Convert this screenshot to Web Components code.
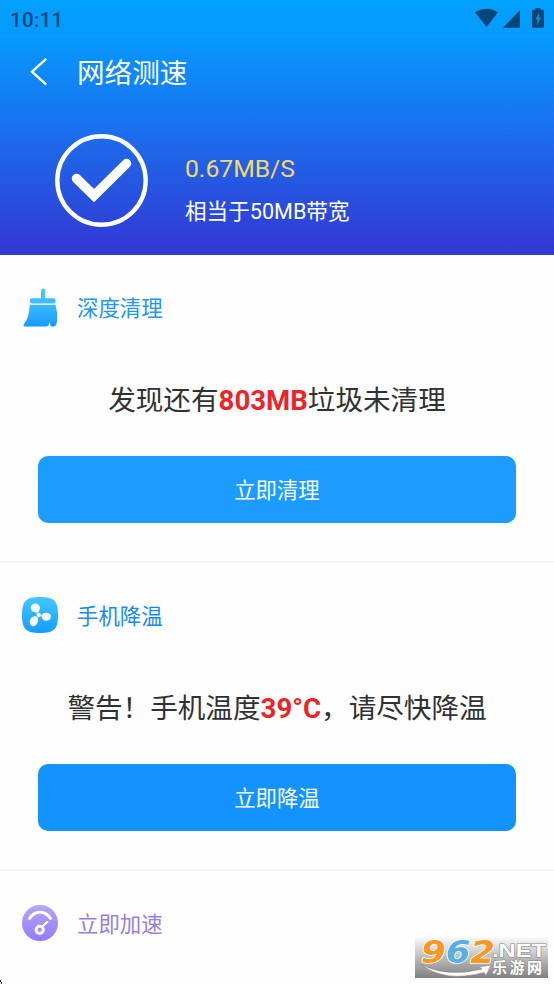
<!DOCTYPE html>
<html lang="zh-CN">
<head>
<meta charset="utf-8">
<title>网络测速</title>
<style>
html,body{margin:0;padding:0}
body{width:554px;height:984px;overflow:hidden;background:#fefefe;position:relative;font-family:Roboto,"Noto Sans CJK SC",sans-serif;color:#303133}
</style>
</head>
<body>
<speed-page></speed-page>
<script>
const define = (name, html) => customElements.define(name, class extends HTMLElement {
  constructor() {
    super();
    const t = document.createElement('template');
    t.innerHTML = html;
    this.attachShadow({mode: 'open'}).append(t.content.cloneNode(true));
  }
});

define('status-bar', `
<style>
:host{display:flex;height:38px;box-sizing:border-box;padding:0 9px 0 10px;align-items:center;justify-content:space-between;color:#064778}
span{font-size:20.500px;line-height:38px;font-weight:500;letter-spacing:.3px;padding-top:1px}
svg{display:block}
</style>
<span>10:11</span>
<svg width="72" height="38" viewBox="473 0 72 38">
<path fill="#064778" d="M475 12.3C482 7.400 491 7.400 498 12.300L486.500 27ZM503 27.700L520 10v17.700ZM535.300 8h5v1.700h2.200q1.500 0 1.500 1.500v15q0 1.500-1.500 1.500h-9q-1.500 0-1.500-1.500v-15q0-1.500 1.500-1.500h1.800Z"/>
<path fill="#1c86cf" d="M539.300 12.500l-4 7h2.300l-1 6 4.400-8h-2.300Z"/>
</svg>`);

define('nav-bar', `
<style>
:host{display:flex;align-items:center;height:68px;padding-left:29px;color:#fff}
svg{display:block;margin-right:28px}
span{font-size:27.600px;line-height:40px;padding-top:3px}
</style>
<svg width="20" height="30" viewBox="0 0 20 30"><path d="M17.200 1.800L3 14.700 17.200 27.600" fill="none" stroke="#fff" stroke-width="2.400"/></svg>
<span><slot></slot></span>`);

define('speed-result', `
<style>
:host{display:flex;padding:27px 0 0 54px;gap:36px;color:#fff}
svg{display:block}
.t{display:flex;flex-direction:column;padding-top:20px}
.a{font-size:24.700px;line-height:32px;color:#f7d768}
.b{font-size:21.600px;line-height:32px;margin-top:11px}
</style>
<svg width="95" height="95" viewBox="0 0 95 95"><circle cx="47.500" cy="47.500" r="44.200" fill="none" stroke="#fff" stroke-width="4.400"/><path d="M22.500 45.500L40 62.700 72.500 30.500" fill="none" stroke="#fff" stroke-width="9.500" stroke-linecap="round" stroke-linejoin="miter"/></svg>
<div class="t"><div class="a"><slot name="speed"></slot></div><div class="b"><slot name="band"></slot></div></div>`);

define('top-panel', `
<style>:host{display:block;height:255px;background:linear-gradient(#00a0ff 0,#079aff 14%,#3436d3 100%)}</style>
<slot></slot>`);

define('feature-card', `
<style>
:host{display:block;height:308px;box-sizing:border-box;border-bottom:2px solid #f6f6f6}
.h{display:flex;align-items:center;padding:32px 0 0 21px;gap:18px;height:40px;color:var(--tone)}
.h span{font-size:21.400px;line-height:40px;padding-top:3px}
.m{margin-top:54px;height:40px;line-height:40px;text-align:center;font-size:27.600px;white-space:nowrap}
.b{margin:35px 38.500px 0 38.400px;height:65px;padding-top:2px;border-radius:10px;background:var(--btn);color:#fff;text-align:center;font-size:21.400px;line-height:65px}
::slotted(b){color:#ec2429;font-weight:700}
:host([short]){height:110px;border:0}
:host([short]) .m,:host([short]) .b{display:none}
</style>
<div class="h"><slot name="icon"></slot><span><slot name="title"></slot></span></div>
<div class="m"><slot></slot></div>
<div class="b"><slot name="action"></slot></div>`);

define('icon-brush', `
<style>:host{display:block;width:38px;height:40px}svg{display:block}</style>
<svg width="38" height="40" viewBox="0 0 38 40"><defs><linearGradient id="g" x1="0" y1="0" x2="0" y2="40" gradientUnits="userSpaceOnUse"><stop stop-color="#4dccfe"/><stop offset=".5" stop-color="#3bb6fc"/><stop offset="1" stop-color="#149bff"/></linearGradient></defs>
<g fill="url(#g)"><rect x="20" y="1.500" width="4.200" height="13" rx="2.100"/><rect x="9" y="11.300" width="25.500" height="5.200" rx="1.800"/><path d="M8.700 17.800h25.800Q37 26 36 34.500q-.7 5-3.600 5h-1.600q-2.300 0-1.600-5.500-1.500 5.500-4 5.500H4Q1.400 39 3.300 36.500 8.500 30 8.700 17.800Z"/></g></svg>`);

define('icon-fan', `
<style>:host{display:block;width:38px;height:38px}svg{display:block}</style>
<svg width="38" height="38" viewBox="0 0 38 38"><defs><linearGradient id="g" x2="0" y2="1"><stop stop-color="#43c7ff"/><stop offset="1" stop-color="#169cff"/></linearGradient></defs>
<path fill="url(#g)" d="M19 1C33 1 37 5 37 19S33 37 19 37 1 33 1 19 5 1 19 1Z"/>
<g fill="#fff"><ellipse cx="14.300" cy="11.800" rx="4.600" ry="4.400"/><path d="M10.500 14L17.300 18 18.800 11.500Z"/><ellipse cx="25.300" cy="20.700" rx="4.600" ry="4"/><path d="M19.500 19.500L23.500 17l1 7Z"/><ellipse cx="12.800" cy="25.300" rx="4" ry="4.900" transform="rotate(18 12.800 25.300)"/><path d="M10.200 21.400L17 19.500 16.500 26Z"/></g><circle cx="17.700" cy="19" r="2.500" fill="#fff" stroke="#35b3fe" stroke-width=".7"/></svg>`);

define('icon-gauge', `
<style>:host{display:block;width:38px;height:38px}svg{display:block}</style>
<svg width="38" height="38" viewBox="0 0 38 38"><defs><linearGradient id="g" x2="0" y2="1"><stop stop-color="#b5a7f4"/><stop offset="1" stop-color="#9579f8"/></linearGradient></defs>
<circle cx="19" cy="19" r="18" fill="url(#g)"/>
<g fill="none" stroke="#fff" stroke-linecap="round"><path d="M8.500 14.500C13.500 6 24.500 6 29.500 14.500" stroke-width="3"/><circle cx="18.700" cy="25.800" r="3.600" stroke-width="3"/><path d="M21.700 22L26.300 18" stroke-width="2.200"/></g></svg>`);

define('site-mark', `
<style>
:host{display:block;position:absolute;left:415px;top:937px;width:133px;height:41px}
svg{display:block;overflow:visible}
text{font-family:"Liberation Sans","Noto Sans CJK SC",sans-serif;font-weight:700}
.n{font-family:"DejaVu Sans",sans-serif}
</style>
<svg width="133" height="41" viewBox="0 0 133 41"><defs><linearGradient id="g" x2="0" y2="1"><stop stop-color="#fbfbfb"/><stop offset=".5" stop-color="#bcbcbc"/><stop offset="1" stop-color="#818181"/></linearGradient></defs>
<rect width="133" height="41" fill="url(#g)"/>
<path d="M6 27.500Q32 41 67 32L64 30 76 28 71 38.500 69 35.500Q30 46 6 27.500Z" fill="#fff" stroke="#888" stroke-width=".6"/>
<g font-style="italic" font-size="32" stroke="#fff" stroke-width="1.600" paint-order="stroke" stroke-linejoin="round"><text class="n" x="6" y="25.500" textLength="74" lengthAdjust="spacingAndGlyphs" fill="#f79724">9<tspan fill="#58afe2">6</tspan>2</text></g>
<g fill="#fff" stroke="#888" stroke-width="1" paint-order="stroke"><text x="77" y="19.500" font-size="18.500" textLength="54" lengthAdjust="spacingAndGlyphs">.NET</text><text x="77" y="36" font-size="15" textLength="50" lengthAdjust="spacing">乐游网</text></g></svg>`);

define('speed-page', `
<style>
:host{display:flex;flex-direction:column;width:554px;height:984px;position:relative;overflow:hidden}
.c{position:absolute;left:0;bottom:0;display:block}
</style>
<top-panel>
<status-bar></status-bar>
<nav-bar>网络测速</nav-bar>
<speed-result><span slot="speed">0.67MB/S</span><span slot="band">相当于50MB带宽</span></speed-result>
</top-panel>
<feature-card style="--tone:#2196ee;--btn:#1b9cfe"><icon-brush slot="icon"></icon-brush><span slot="title">深度清理</span>发现还有<b>803MB</b>垃圾未清理<span slot="action">立即清理</span></feature-card>
<feature-card style="--tone:#168bed;--btn:#1493fe"><icon-fan slot="icon"></icon-fan><span slot="title">手机降温</span>警告！手机温度<b>39°C</b>，请尽快降温<span slot="action">立即降温</span></feature-card>
<feature-card short style="--tone:#9680df"><icon-gauge slot="icon"></icon-gauge><span slot="title">立即加速</span></feature-card>
<site-mark></site-mark>
<svg class="c" width="3" height="4" viewBox="0 0 3 4"><path d="M0 0h1v2h1v2H1V2H0Z" fill="#222"/></svg>`);
</script>
</body>
</html>
